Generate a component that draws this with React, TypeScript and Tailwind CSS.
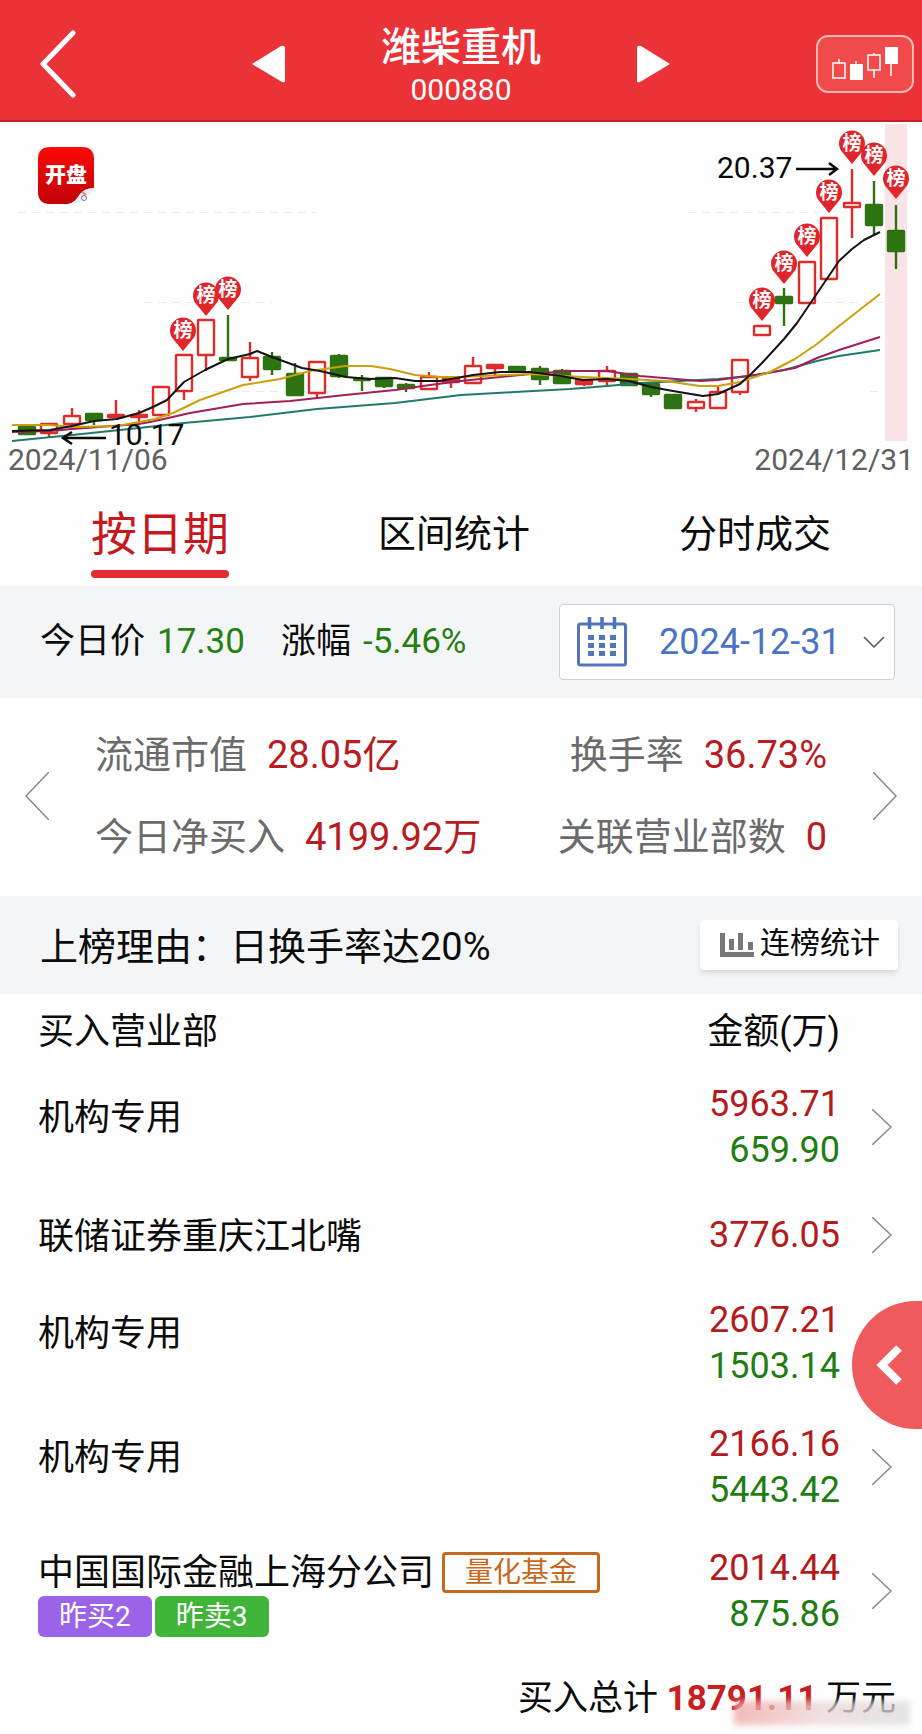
import { useState } from "react";

type Candle = {
  x: number;
  high: number;
  top: number;
  bottom: number;
  low: number;
  kind: "up" | "flat" | "down";
};

function candle(
  x: number,
  high: number,
  top: number,
  bottom: number,
  low: number,
  kind: Candle["kind"]
): Candle {
  return { x, high, top, bottom, low, kind };
}

const candles: Candle[] = [
  candle(27, 427, 427, 434, 434, "down"),
  candle(49, 424, 424, 433, 437, "up"),
  candle(72, 408, 416, 424, 428, "up"),
  candle(94, 414, 414, 420, 425, "down"),
  candle(116, 400, 415, 417, 417, "flat"),
  candle(139, 410, 415, 417, 424, "flat"),
  candle(161, 387, 387, 415, 415, "up"),
  candle(184, 355, 355, 391, 400, "up"),
  candle(206, 320, 320, 355, 371, "up"),
  candle(228, 315, 358, 360, 360, "down"),
  candle(250, 342, 358, 377, 381, "up"),
  candle(272, 352, 357, 369, 375, "down"),
  candle(295, 363, 374, 395, 395, "down"),
  candle(317, 362, 362, 393, 398, "up"),
  candle(339, 354, 356, 376, 378, "down"),
  candle(362, 375, 379, 380, 391, "down"),
  candle(384, 377, 378, 386, 388, "down"),
  candle(406, 383, 385, 388, 392, "down"),
  candle(429, 372, 377, 389, 389, "up"),
  candle(451, 377, 378, 382, 388, "flat"),
  candle(473, 357, 366, 383, 383, "up"),
  candle(495, 365, 365, 368, 375, "flat"),
  candle(517, 367, 367, 370, 373, "down"),
  candle(540, 366, 369, 379, 385, "down"),
  candle(562, 369, 371, 383, 383, "down"),
  candle(584, 379, 380, 384, 386, "flat"),
  candle(607, 366, 371, 381, 385, "up"),
  candle(629, 374, 374, 385, 385, "down"),
  candle(651, 383, 384, 394, 397, "down"),
  candle(673, 395, 395, 408, 408, "down"),
  candle(696, 399, 402, 408, 412, "up"),
  candle(718, 387, 392, 408, 408, "up"),
  candle(740, 360, 360, 392, 395, "up"),
  candle(762, 326, 326, 335, 335, "up"),
  candle(784, 288, 297, 303, 326, "down"),
  candle(807, 262, 262, 303, 303, "up"),
  candle(829, 218, 218, 279, 279, "up"),
  candle(852, 169, 203, 207, 238, "up"),
  candle(874, 181, 205, 225, 236, "down"),
  candle(896, 205, 231, 251, 269, "down"),
];

// pin centres, the tip sits 20 below
const pins = [
  [183, 331],
  [206, 296],
  [228, 290],
  [762, 301],
  [784, 264],
  [807, 237],
  [829, 193],
  [852, 144],
  [874, 156],
  [896, 179],
];

const averages = [
  {
    color: "#237a6c",
    points:
      "12,441 72,435 139,428 184,423 250,417 317,409 395,403 461,395 515,392 570,389 607,386 640,383 680,381 718,379 750,376 784,370 817,361 839,356 880,350",
  },
  {
    color: "#a02058",
    points:
      "12,432 50,431 72,429 139,424 155,421 190,413 243,404 290,401 345,395 395,390 430,385 461,381 500,377 530,374 570,371 607,371 640,376 700,381 718,380 740,377 762,374 795,368 817,358 839,350 880,337",
  },
  {
    color: "#c9a10c",
    points:
      "12,425 50,425 72,427 117,426 139,422 155,419 173,413 200,400 243,385 280,379 310,371 345,366 371,366 390,369 415,375 440,377 461,377 530,374 583,377 630,379 665,381 700,386 718,386 740,382 770,372 795,359 817,344 839,326 880,294",
  },
  {
    color: "#141414",
    points:
      "12,431 50,430 72,426 94,421 117,419 139,413 153,407 167,400 184,382 205,370 228,359 250,354 257,351 272,357 302,368 320,371 346,377 370,379 395,378 415,381 440,381 473,375 500,372 530,372 561,376 583,380 607,379 629,381 651,387 673,391 703,396 718,394 740,384 752,373 762,363 784,339 797,323 820,289 839,261 852,249 864,240 880,232",
  },
];

const tabs = ["按日期", "区间统计", "分时成交"];

const rows = [
  { name: "机构专用", buy: "5963.71", sell: "659.90" },
  { name: "联储证券重庆江北嘴", buy: "3776.05" },
  { name: "机构专用", buy: "2607.21", sell: "1503.14" },
  { name: "机构专用", buy: "2166.16", sell: "5443.42" },
  {
    name: "中国国际金融上海分公司",
    buy: "2014.44",
    sell: "875.86",
    fund: "量化基金",
    tags: true,
  },
];

function CandleShape({ c }: { c: Candle }) {
  const color = c.kind === "down" ? "#2d7312" : "#dc2c2c";
  return (
    <g stroke={color} strokeWidth="2.400">
      {c.high < c.top && <path d={`M${c.x} ${c.high}V${c.top}`} />}
      {c.low > c.bottom && <path d={`M${c.x} ${c.bottom}V${c.low}`} />}
      <rect
        x={c.x - 8}
        y={c.top}
        width="16"
        height={c.bottom - c.top}
        rx="0.5"
        fill={c.kind === "up" ? "#fffdfc" : color}
      />
    </g>
  );
}

function StockChart() {
  return (
    <svg
      viewBox="0 122 922 324"
      className="block w-full overflow-visible"
      role="img"
      aria-label="K线图"
    >
      <defs>
        <linearGradient id="appIcon" x1="0" y1="0" x2="0" y2="1">
          <stop offset="0" stopColor="#fb0a06" />
          <stop offset="1" stopColor="#c00309" />
        </linearGradient>
      </defs>
      <rect x="885" y="124" width="22" height="317" fill="#f9e3e7" />
      <g stroke="#ececec" strokeDasharray="8 6">
        <path d="M18 212.500H315M688 212.500H820" />
        <path d="M144 302.500H272M738 302.500H884" />
        <path d="M144 391.500H330M870 391.500H884" />
      </g>

      <path
        d="M50 147H82Q94 147 94 159V188Q85 188 80 194Q75 203 68 204H50Q38 204 38 192V159Q38 147 50 147Z"
        fill="url(#appIcon)"
      />
      <path d="M94 188Q85 188 80 194Q75 203 68 204Q84 204 94 188Z" fill="#e9ebf7" />
      <circle cx="84" cy="198" r="2.500" fill="none" stroke="#8a6f9c" />
      <path d="M82 192L86 195" stroke="#e0905a" strokeWidth="2" />
      <text
        x="66"
        y="182"
        textAnchor="middle"
        fontSize="21"
        fontWeight="900"
        fill="#fff"
      >
        开盘
      </text>

      {candles.map((c) => (
        <CandleShape key={c.x} c={c} />
      ))}
      {averages.map((line) => (
        <polyline
          key={line.color}
          points={line.points}
          fill="none"
          stroke={line.color}
          strokeWidth="2"
          strokeLinejoin="round"
        />
      ))}
      {pins.map(([x, y]) => (
        <g key={x}>
          <path
            d={`M${x} ${y + 20}L${x - 9} ${y + 9}A13 13 0 1 1 ${x + 9} ${y + 9}Z`}
            fill="#e0262b"
          />
          <text
            x={x}
            y={y + 6}
            textAnchor="middle"
            fontSize="19"
            fontWeight="700"
            fill="#fff"
          >
            榜
          </text>
        </g>
      ))}

      <g fontSize="30" fill="#0a0a0a">
        <text x="717" y="178">
          20.37
        </text>
        <text x="109" y="445">
          10.17
        </text>
      </g>
      <g fill="none" stroke="#0a0a0a" strokeWidth="2.500">
        <path d="M796 169H836M829 163L837 169L829 175" />
        <path d="M106 438H64M72 432L63 438L72 444" />
      </g>
    </svg>
  );
}

function Header() {
  return (
    <header className="flex h-[122px] items-center justify-between border-b-2 border-[#c4202b] bg-[#eb3236] pt-2 pr-2 pl-9 text-white">
      <button aria-label="返回" className="w-[70px]">
        <svg width="42" height="68" viewBox="0 0 42 68" fill="none">
          <path
            d="M37 3L7 34L37 65"
            stroke="currentColor"
            strokeWidth="5"
            strokeLinecap="round"
            strokeLinejoin="round"
          />
        </svg>
      </button>
      <div className="flex items-center gap-24">
        <button aria-label="上一只">
          <svg width="34" height="38" viewBox="0 0 34 38">
            <path d="M1 19L30 1Q34 0 34 3V36Q34 38 31 37Z" fill="currentColor" />
          </svg>
        </button>
        <div className="text-center">
          <h1 className="text-[40px] leading-[52px] font-medium">潍柴重机</h1>
          <p className="text-[30px] leading-8">000880</p>
        </div>
        <button aria-label="下一只">
          <svg width="34" height="38" viewBox="0 0 34 38">
            <path d="M33 19L4 1Q0 0 0 3V36Q0 38 3 37Z" fill="currentColor" />
          </svg>
        </button>
      </div>
      <button
        aria-label="K线"
        className="flex h-[58px] w-[98px] items-center justify-center rounded-xl border-2 border-[#fbb9b4] bg-[#f04a4a]"
      >
        <svg width="68" height="36" viewBox="0 0 68 36" fill="none">
          <g stroke="#fff" strokeWidth="1.500">
            <rect x="2" y="17" width="12" height="15" />
            <path d="M8 13V17M25 15V20M43 7V9M43 24V32M60 18V30" />
            <rect x="37" y="9" width="12" height="15" />
          </g>
          <rect x="19" y="18" width="13" height="16" fill="#fff" />
          <rect x="54" y="1" width="13" height="17" fill="#fff" />
        </svg>
      </button>
    </header>
  );
}

function CalendarIcon() {
  return (
    <svg width="50" height="50" viewBox="0 0 50 50" fill="none">
      <rect x="1.500" y="7" width="47" height="41" rx="2" stroke="#5575b8" strokeWidth="3" />
      <path
        d="M12.500 0V12M25 0V12M37.500 0V12"
        stroke="#4d72bd"
        strokeWidth="3.500"
      />
      <path
        d="M11 20.500H39M11 28.500H39M11 36.500H39"
        stroke="#5575b8"
        strokeWidth="5"
        strokeDasharray="6 5"
      />
    </svg>
  );
}

function Stat({ label, value }: { label: string; value: string }) {
  return (
    <div className="flex gap-5">
      <dt className="text-[#6b6b6b]">{label}</dt>
      <dd className="text-[#b81c22]">{value}</dd>
    </div>
  );
}

export default function App() {
  const [tab, setTab] = useState(tabs[0]);

  return (
    <main className="relative min-h-screen overflow-hidden bg-[#fefefe] font-[Roboto,'Noto_Sans_CJK_SC',sans-serif] text-[36px] text-[#0c0c0c]">
      <Header />
      <StockChart />
      <div className="flex justify-between px-2 text-[30px] leading-7 text-[#606060]">
        <time>2024/11/06</time>
        <time>2024/12/31</time>
      </div>

      <nav className="flex h-28 items-end justify-between px-[91px] pb-2">
        {tabs.map((name) => (
          <button
            key={name}
            onClick={() => setTab(name)}
            className={
              tab === name
                ? "text-[46px] leading-[60px] text-[#c8181e]"
                : "text-[38px] leading-[60px]"
            }
          >
            {name}
            <span
              className={
                tab === name
                  ? "mt-1.5 block h-2 rounded-full bg-[#e42a33]"
                  : "mt-1.5 block h-2"
              }
            />
          </button>
        ))}
      </nav>

      <section className="flex h-28 items-center justify-between bg-[#f4f5f7] pr-[27px] pl-10">
        <div className="flex gap-9 text-[35px] leading-10">
          <p className="flex gap-3">
            今日价 <span className="text-[#258012]">17.30</span>
          </p>
          <p className="flex gap-3">
            涨幅 <span className="text-[#258012]">-5.46%</span>
          </p>
        </div>
        <div className="relative flex h-[76px] w-[336px] items-center rounded border border-[#cfd0d4] bg-white pl-[17px]">
          <label htmlFor="date" aria-label="选择日期">
            <CalendarIcon />
          </label>
          <select
            id="date"
            className="h-full flex-1 appearance-none pl-8 text-[36px] text-[#4a73c4]"
          >
            <option>2024-12-31</option>
          </select>
          <svg
            width="22"
            height="12"
            viewBox="0 0 22 12"
            fill="none"
            className="pointer-events-none absolute right-[9px]"
          >
            <path d="M1 1L11 11L21 1" stroke="#555" strokeWidth="1.500" />
          </svg>
        </div>
      </section>

      <section className="flex items-center justify-between px-[25px] pt-4 pb-[18px]">
        <button aria-label="上一日">
          <svg width="24" height="48" viewBox="0 0 24 48" fill="none">
            <path d="M24 0L1 24L24 48" stroke="#888" strokeWidth="1.500" />
          </svg>
        </button>
        <dl className="flex flex-1 justify-between px-[46px] text-[38px] leading-[82px]">
          <div>
            <Stat label="流通市值" value="28.05亿" />
            <Stat label="今日净买入" value="4199.92万" />
          </div>
          <div className="flex flex-col items-end">
            <Stat label="换手率" value="36.73%" />
            <Stat label="关联营业部数" value="0" />
          </div>
        </dl>
        <button aria-label="下一日">
          <svg width="24" height="48" viewBox="0 0 24 48" fill="none">
            <path d="M0 0L23 24L0 48" stroke="#888" strokeWidth="1.500" />
          </svg>
        </button>
      </section>

      <section className="flex h-[98px] items-center justify-between bg-[#f4f5f7] pr-6 pl-10">
        <h2 className="pt-1 text-[38px]">上榜理由：日换手率达20%</h2>
        <button className="flex h-[50px] items-center gap-1.5 rounded bg-white pr-[18px] pl-5 text-[30px] shadow-md">
          <svg width="34" height="24" viewBox="0 0 34 24" fill="#777">
            <path d="M0 0H5V19H34V24H0Z" />
            <path d="M9 6H14V17H9ZM18 0H23V17H18ZM28 9H33V17H28Z" />
          </svg>
          <span className="pb-1.5">连榜统计</span>
        </button>
      </section>

      <table className="w-full text-left leading-[46px]">
        <thead>
          <tr className="h-[71px]">
            <th className="pt-1 pl-[38px] font-normal">买入营业部</th>
            <th className="pt-1 text-right font-normal">金额(万)</th>
            <th className="w-[82px]" />
          </tr>
        </thead>
        <tbody>
          {rows.map((row) => (
            <tr key={row.buy} className="h-[92px]">
              <td
                className={
                  row.sell && !row.tags
                    ? "pb-[18px] pl-[38px]"
                    : "pt-1 pl-[38px]"
                }
              >
                <div className="flex items-center gap-2">
                  {row.name}
                  {row.fund && (
                    <span className="rounded border-[3px] border-[#c4691e] px-5 text-[28px] leading-[35px] text-[#c4691e]">
                      {row.fund}
                    </span>
                  )}
                </div>
                {row.tags && (
                  <div className="flex gap-[3px] text-[28px] leading-[41px] text-white">
                    <span className="rounded-md bg-[#9a63e8] px-[21px]">昨买2</span>
                    <span className="rounded-md bg-[#41b53a] px-[21px]">昨卖3</span>
                  </div>
                )}
              </td>
              <td className="py-4 text-right">
                <div className="text-[#b51a1c]">{row.buy}</div>
                {row.sell && <div className="text-[#1f7d12]">{row.sell}</div>}
              </td>
              <td className="pl-8">
                <a href="#detail" aria-label="详情" className="block">
                  <svg width="20" height="36" viewBox="0 0 20 36" fill="none">
                    <path d="M0 0L19 18L0 36" stroke="#888" strokeWidth="1.500" />
                  </svg>
                </a>
              </td>
            </tr>
          ))}
        </tbody>
        <tfoot>
          <tr>
            <td
              colSpan={3}
              className="relative pt-[23px] pr-[26px] text-right text-[35px]"
            >
              买入总计{" "}
              <strong className="font-bold text-[#c8201f]">18791.11</strong> 万元
              <div className="absolute top-12 right-3 h-6 w-[176px] bg-linear-to-r from-[#f0a3a3] via-[#ecd6d6] to-[#dcdcdc] opacity-75 blur-[3px]" />
            </td>
          </tr>
        </tfoot>
      </table>

      <button
        aria-label="展开"
        className="fixed top-3/4 right-0 flex h-32 w-[70px] items-center rounded-l-full bg-[#ef5a5c] pl-6 text-white"
      >
        <svg width="28" height="40" viewBox="0 0 28 40" fill="none">
          <path d="M23 3L6 20L23 37" stroke="currentColor" strokeWidth="8" />
        </svg>
      </button>
    </main>
  );
}
